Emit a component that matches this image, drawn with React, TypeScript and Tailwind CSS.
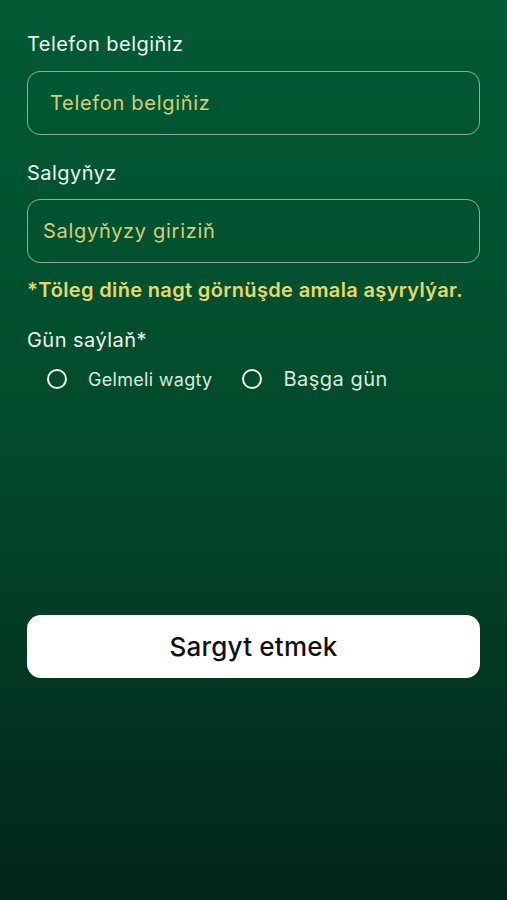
export default function App() {
  return (
    <div
      className="min-h-[900px] w-full bg-gradient-to-b from-[#015b35] via-[#024a2b] to-[#02261a] px-[27px] pt-[31px] text-white"
      style={{ fontFamily: "Inter, 'Noto Sans', sans-serif" }}
    >
      {/* Phone */}
      <label className="block text-[20px] leading-[26px] tracking-[0.45px] text-[#eef3ee]">Telefon belgiňiz</label>
      <div className="mt-[14px] flex h-[64px] items-center rounded-[13px] border-[1.5px] border-[#8fae98] pl-[22px]">
        <span className="text-[20px] tracking-[0.7px] text-[#d6cd7c]">Telefon belgiňiz</span>
      </div>

      {/* Address */}
      <label className="mt-[25px] block text-[20px] leading-[26px] tracking-[0.45px] text-[#eef3ee]">Salgyňyz</label>
      <div className="mt-[13px] flex h-[64px] items-center rounded-[13px] border-[1.5px] border-[#8fae98] pl-[15px]">
        <span className="text-[20px] tracking-[0.7px] text-[#d6cd7c]">Salgyňyzy giriziň</span>
      </div>

      <p className="mt-[14px] text-[20px] font-semibold leading-[26px] tracking-[0.35px] text-[#e6d86e]">
        *Töleg diňe nagt görnüşde amala aşyrylýar.
      </p>

      <p className="mt-[24px] text-[20px] leading-[26px] tracking-[0.45px] text-[#eef3ee]">Gün saýlaň*</p>

      <div className="mt-[11px] flex items-center pl-[20px]">
        <Radio />
        <span className="ml-[21px] text-[18px] tracking-[0.3px] text-[#d9eadb]">Gelmeli wagty</span>
        <div className="ml-[30px]">
          <Radio />
        </div>
        <span className="ml-[21px] text-[20px] tracking-[0.5px] text-[#d9eadb]">Başga gün</span>
      </div>

      <button className="mt-[221px] flex h-[63px] w-full items-center justify-center rounded-[14px] bg-white text-[26px] font-medium tracking-[0.2px] text-[#111]">
        Sargyt etmek
      </button>
    </div>
  );
}

function Radio() {
  return <span className="block h-[20px] w-[20px] rounded-full border-[2.5px] border-[#eef5ee]" />;
}
